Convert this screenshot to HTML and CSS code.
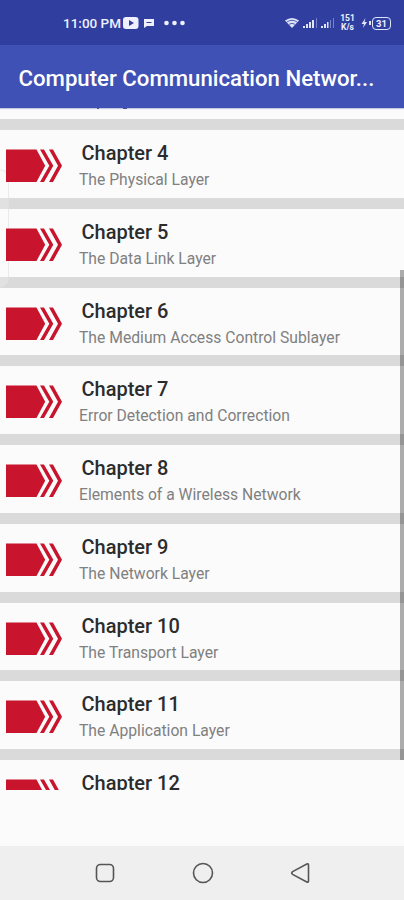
FILE: index.html
```html
<!DOCTYPE html>
<html lang="en">
<head>
<meta charset="utf-8">
<title>Computer Communication Networks</title>
<link rel="stylesheet" href="styles.css">
</head>
<body>
<svg width="0" height="0" class="defs" aria-hidden="true">
  <symbol id="arrow" viewBox="0 0 56 34">
    <path fill="#c8152d" d="M0 .5h30.500l8.700 16.300L30.500 33H0z"/>
    <path fill="#c8152d" d="M34 .5h4l9.300 16.300L38 33h-4l9.300-16.200zM43 .5h4l9 16.300L47 33h-4l9-16.200z"/>
  </symbol>
</svg>
<div class="status">
  <span class="time">11:00 PM</span>
  <svg class="notices" width="64" height="16" viewBox="0 0 64 16" fill="#eef0ff">
    <rect x="0" y="2" width="15.500" height="12" rx="3"/>
    <path fill="#303f9f" d="M6 5l5 3-5 3z"/>
    <path d="M21 4h10v7h-7l-3 2z"/>
    <path stroke="#303f9f" d="M23.500 7.500h5"/>
    <circle cx="43.500" cy="8" r="2.300"/><circle cx="51.500" cy="8" r="2.300"/><circle cx="59.500" cy="8" r="2.300"/>
  </svg>
  <svg class="signals" width="50" height="16" viewBox="0 0 50 16" fill="#dfe3fa">
    <path d="M0 5.500Q7 .5 14 5.500L7 13z"/>
    <path fill="none" stroke="#303f9f" stroke-width=".8" d="M2 7q5-3.500 10 0M4 9.300q3-2 6 0"/>
    <path d="M18 11h2v2h-2zM21 9h2v4h-2zM24 7h2v6h-2zM27 5h2v8h-2zM36 11h2v2h-2zM39 9h2v4h-2zM42 7h1.500v6H42z"/>
    <path fill="#7784cb" d="M31 3h1v10h-1zM45 5h1v8h-1zM48 3h1v10h-1z"/>
  </svg>
  <span class="speed"><span>151</span><span>K/s</span></span>
  <svg class="bolt" width="8" height="12" viewBox="0 0 8 12"><path fill="#e4e7ff" d="M4.500 1L.5 7h2.500L2 11l4-6H3.500z"/></svg>
  <span class="battery">31</span>
</div>
<header class="bar"><h1>Computer Communication Networ...</h1></header>
<main class="screen">
  <div class="list">
    <div class="peek"><svg width="30" height="2" viewBox="0 0 30 2" fill="#45508f"><path d="M0 0h2v1H0zM26 0h4v1h-4z"/></svg></div>
    <div class="row"><svg class="icon"><use href="#arrow"/></svg><div class="text"><b>Chapter 4</b><span>The Physical Layer</span></div></div>
    <div class="row"><svg class="icon"><use href="#arrow"/></svg><div class="text"><b>Chapter 5</b><span>The Data Link Layer</span></div></div>
    <div class="row"><svg class="icon"><use href="#arrow"/></svg><div class="text"><b>Chapter 6</b><span>The Medium Access Control Sublayer</span></div></div>
    <div class="row"><svg class="icon"><use href="#arrow"/></svg><div class="text"><b>Chapter 7</b><span>Error Detection and Correction</span></div></div>
    <div class="row"><svg class="icon"><use href="#arrow"/></svg><div class="text"><b>Chapter 8</b><span>Elements of a Wireless Network</span></div></div>
    <div class="row"><svg class="icon"><use href="#arrow"/></svg><div class="text"><b>Chapter 9</b><span>The Network Layer</span></div></div>
    <div class="row"><svg class="icon"><use href="#arrow"/></svg><div class="text"><b>Chapter 10</b><span>The Transport Layer</span></div></div>
    <div class="row"><svg class="icon"><use href="#arrow"/></svg><div class="text"><b>Chapter 11</b><span>The Application Layer</span></div></div>
    <div class="row"><svg class="icon"><use href="#arrow"/></svg><div class="text"><b>Chapter 12</b></div></div>
  </div>
  <div class="edge-panel"></div>
  <div class="scrollbar"></div>
</main>
<nav class="nav">
  <svg width="24" height="24" viewBox="0 0 24 24"><rect x="3.500" y="3.500" width="17" height="17" rx="4"/></svg>
  <svg width="24" height="24" viewBox="0 0 24 24"><circle cx="12" cy="12" r="9.500"/></svg>
  <svg width="24" height="24" viewBox="0 0 24 24"><path d="M3.600 10.600L17.800 3q1.700-.6 1.700 1.200v15.600q0 1.800-1.700 1.100L3.600 13.400q-1.800-1.400 0-2.800z"/></svg>
</nav>
</body>
</html>
```
FILE: styles.css
```css
* { box-sizing: border-box; }

body {
  margin: 0;
  width: 404px;
  height: 900px;
  display: flex;
  flex-direction: column;
  overflow: hidden;
  background: #fbfbfb;
  font-family: Roboto, "Liberation Sans", sans-serif;
}

.defs { position: absolute; }

.status {
  flex: none;
  height: 45px;
  display: flex;
  align-items: center;
  padding: 1px 13px 0 63px;
  background: #303f9f;
  color: #eef0ff;
}

.time { width: 60px; font-size: 13.500px; font-weight: 500; white-space: nowrap; }
.notices { flex: none; }
.signals { flex: none; margin-left: 98px; }

.speed {
  width: 15px;
  margin-left: 5px;
  display: flex;
  flex-direction: column;
  align-items: center;
  font-size: 8.500px;
  line-height: 9px;
  font-weight: 700;
}

.bolt { flex: none; margin-left: 6px; }

.battery {
  position: relative;
  flex: none;
  width: 19px;
  height: 13px;
  margin-left: 3px;
  border: 1.500px solid #dfe3fa;
  border-radius: 4px;
  font-size: 9.500px;
  line-height: 11px;
  font-weight: 700;
  text-align: center;
}

.battery::before {
  content: "";
  position: absolute;
  left: -4px;
  top: 3.500px;
  width: 2px;
  height: 4px;
  background: #dfe3fa;
}

.bar {
  flex: none;
  height: 63px;
  display: flex;
  align-items: center;
  padding: 3px 0 0 18.500px;
  background: #3f51b5;
  box-shadow: 0 1px 1px #c5c9e0;
  color: #fff;
}

.bar h1 { margin: 0; font-size: 22.200px; font-weight: 500; white-space: nowrap; }

.screen { position: relative; flex: 1; }

.list {
  height: 682px;
  overflow: hidden;
  display: flex;
  flex-direction: column;
}

.peek {
  flex: none;
  height: 22px;
  display: flex;
  align-items: flex-start;
  padding-left: 97px;
  border-bottom: 11px solid #dadada;
}

.row {
  flex: none;
  height: 78.750px;
  display: flex;
  align-items: flex-start;
  padding: 19px 0 0 6px;
  border-bottom: 11px solid #dadada;
}

.icon { position: relative; z-index: 1; flex: none; width: 56px; height: 34px; }
.text { display: flex; flex-direction: column; padding-left: 17px; margin-top: -8px; }
.text b { padding-left: 2.500px; font-size: 20px; line-height: 24px; font-weight: 500; color: #2c2c2c; }
.text span { margin-top: 5px; font-size: 15.700px; line-height: 20px; color: #808080; }

.edge-panel {
  position: absolute;
  left: -10px;
  top: 61px;
  width: 19px;
  height: 119px;
  border: 1px solid #dddddd99;
  border-radius: 0 10px 10px 0;
  background: #ffffff33;
}

.scrollbar {
  position: absolute;
  right: 0;
  top: 162px;
  width: 4px;
  height: 490px;
  background: #00000050;
}

.nav {
  flex: none;
  height: 54px;
  display: flex;
  align-items: center;
  justify-content: center;
  gap: 74px;
  padding-left: 1px;
  background: #efefef;
}

.nav svg { fill: none; stroke: #555; stroke-width: 1.600; }
```
